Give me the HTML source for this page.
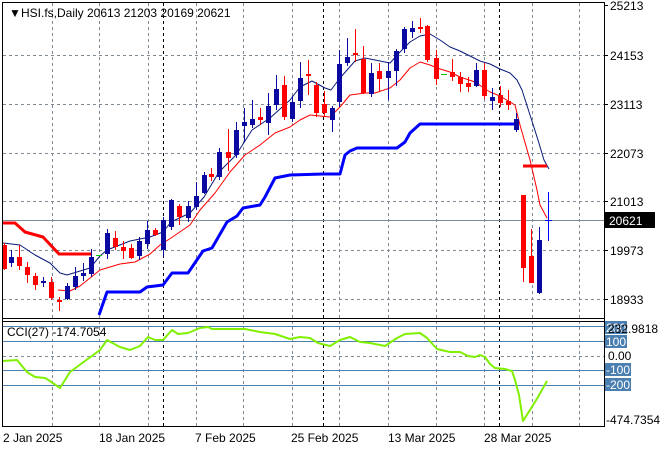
<!DOCTYPE html>
<html><head><meta charset="utf-8"><style>
html,body{margin:0;padding:0;background:#fff;width:660px;height:450px;overflow:hidden}
svg{display:block}
text{font-family:"Liberation Sans",sans-serif;font-size:12px;fill:#000}
</style></head><body>
<svg id="s" width="660" height="450" xmlns="http://www.w3.org/2000/svg">
<rect width="660" height="450" fill="#fff"/>
<g id="grid" stroke="#7f8a94" stroke-dasharray="3,3" stroke-width="1"></g>
<g id="bl" stroke="#000" stroke-dasharray="3,3" stroke-width="1">
<line x1="163.5" y1="3" x2="163.5" y2="426"/><line x1="323.5" y1="3" x2="323.5" y2="426"/><line x1="499.5" y1="3" x2="499.5" y2="426"/>
</g>
<line x1="3" y1="220.5" x2="604" y2="220.5" stroke="#7f8a94"/>
<g id="lines" fill="none"></g>
<g id="candles"></g>
<g id="cci" fill="none"></g>
<!-- borders -->
<g stroke="#000" fill="none">
<line x1="2.5" y1="2.5" x2="604.5" y2="2.5"/>
<line x1="2.5" y1="2" x2="2.5" y2="427"/>
<line x1="604.5" y1="2" x2="604.5" y2="427"/>
<line x1="2" y1="318.5" x2="605" y2="318.5"/>
<line x1="2" y1="321.5" x2="605" y2="321.5"/>
<line x1="2" y1="426.5" x2="605" y2="426.5"/>
</g>
<g id="ticks" stroke="#000"></g>
<text x="9" y="17" font-size="9">▼</text>
<text x="21" y="17">HSI.fs,Daily  20613 21203 20169 20621</text>
<text x="7" y="336">CCI(27) -174.7054</text>
<g id="ylab"></g>
<rect x="605" y="212" width="50" height="16" fill="#000"/>
<text x="609" y="225" style="fill:#fff">20621</text>
<rect x="605" y="321" width="22" height="13" fill="#4a7fb0"/>
<text x="606" y="332" style="fill:#fff">200</text>
<text x="608" y="333">232.9818</text>
<rect x="605" y="335" width="22" height="13" fill="#4a7fb0"/>
<text x="606" y="346" style="fill:#fff">100</text>
<text x="608" y="360">0.00</text>
<rect x="605" y="363" width="26" height="13" fill="#4a7fb0"/>
<text x="606" y="374" style="fill:#fff">-100</text>
<rect x="605" y="378" width="26" height="13" fill="#4a7fb0"/>
<text x="606" y="389" style="fill:#fff">-200</text>
<text x="606" y="424">-474.7354</text>
<text x="3" y="442">2 Jan 2025</text>
<text x="99" y="442">18 Jan 2025</text>
<text x="195" y="442">7 Feb 2025</text>
<text x="291" y="442">25 Feb 2025</text>
<text x="388" y="442">13 Mar 2025</text>
<text x="484" y="442">28 Mar 2025</text>
</svg>
<script>
const NS="http://www.w3.org/2000/svg";
function el(p,t,a){const e=document.createElementNS(NS,t);for(const k in a)e.setAttribute(k,a[k]);document.getElementById(p).appendChild(e);return e;}
const ys=[5,55,104,153,201,250,299],labs=["25213","24153","23113","22073","21013","19973","18933"];
ys.forEach((y,i)=>{if(i>0)el("grid","line",{x1:3,y1:y+.5,x2:604,y2:y+.5});
el("ticks","line",{x1:604,y1:y+.5,x2:608,y2:y+.5});
const t=el("ylab","text",{x:610,y:y+5});t.textContent=labs[i];});
[52,99,148,196,243,292,339,388,436,484,532,579].forEach(x=>el("grid","line",{x1:x+.5,y1:3,x2:x+.5,y2:426}));
el("grid","line",{x1:3,y1:356.5,x2:604,y2:356.5});
[326,341,370,385].forEach(y=>el("cci","line",{x1:3,y1:y+.5,x2:604,y2:y+.5,stroke:"#4a7fb0"}));
function pl(g,pts,c,w){el(g,"polyline",{points:pts,stroke:c,"stroke-width":w,fill:"none","stroke-linejoin":"round"});}
pl("lines","3,243 20,245 35,255 50,263 60,273 67,275 90,268 100,256 107,250 130,241 150,237 163,232 171,222 190,213 204,197 219,172 236,155 252,130 270,118 290,100 300,87 312,81 325,88 331,90 340,78 355,61 365,58 375,60 390,63 400,52 410,42 420,36 430,34 440,40 450,47 460,51 470,56 480,61 490,64 500,69 510,73 517,80 522,90 530,115 538,140 544,160 549,169","#0a1a7a",1);
pl("lines","58,290 70,291 80,286 100,270 120,264 135,262 150,254 160,245 171,238 190,225 200,210 215,193 230,172 245,155 260,145 275,133 290,127 300,120 310,115 330,117 340,107 350,95 365,93 375,93 390,88 400,80 410,68 420,62 430,65 440,69 450,72 460,77 475,82 490,92 500,96 515,105 520,125 530,160 537,190 540,205 547,218","#ff0000",1);
pl("lines","3,223 15,223 25,232 43,237 59,254 92,254","#ff0000",3);
pl("lines","523,166 547,166","#ff0000",3);
pl("lines","99,315 107,292 140,292 147,287 163,285 172,273 188,273 203,251 212,248 227,222 237,216 243,208 260,205 265,197 275,178 290,175 323,174 340,174 345,155 350,151 357,148 397,148 405,142 410,133 420,124 516,124","#0000ff",3);
const C=[[4,'r',245,269,243,270],[11,'b',257,263,250,267],[19,'r',257,266,245,270],[27,'r',267,275,262,283],[35,'r',276,285,273,290],[43,'b',281,283,277,287],[51,'r',282,298,277,300],[59,'r',300,302,297,311],[67,'b',286,299,283,300],[75,'b',276,287,267,290],[83,'b',273,276,263,281],[91,'b',257,274,249,277],[99,'g',255,256,255,256],[107,'b',233,254,229,259],[115,'r',238,247,231,250],[123,'r',247,251,241,259],[131,'r',248,258,244,259],[139,'b',241,256,237,260],[147,'b',230,244,221,249],[155,'r',230,235,228,236],[163,'b',220,250,217,257],[171,'b',200,227,199,230],[179,'r',206,217,204,225],[188,'b',206,218,201,222],[196,'b',196,207,182,210],[204,'b',175,193,172,194],[211,'r',174,177,168,181],[219,'b',152,177,148,180],[228,'r',152,158,129,171],[236,'b',130,155,122,158],[244,'b',122,126,108,142],[252,'b',119,125,100,128],[260,'r',117,120,108,125],[268,'b',106,123,93,135],[276,'b',89,105,75,110],[284,'r',85,117,76,120],[292,'b',102,119,96,122],[300,'b',78,101,62,108],[308,'r',74,76,60,95],[316,'r',85,113,82,117],[324,'r',104,113,91,117],[332,'b',108,120,106,132],[339,'b',64,102,50,107],[347,'b',57,63,38,66],[355,'r',53,55,29,62],[363,'r',59,93,46,94],[371,'b',73,94,63,97],[379,'r',71,79,63,91],[388,'b',71,78,62,100],[396,'b',51,71,49,86],[404,'b',29,49,27,53],[412,'b',28,32,21,38],[420,'r',27,28,18,33],[427,'r',26,60,25,62],[436,'r',58,79,50,85],[444,'g',74,75,74,75],[452,'r',72,77,59,81],[460,'r',77,84,72,92],[468,'r',83,87,77,92],[476,'b',70,86,63,87],[484,'r',70,96,63,99],[492,'b',97,101,88,110],[500,'r',95,103,86,107],[508,'r',101,105,90,110],[516,'b',119,130,113,132],[523,'r',195,268,195,282],[531,'r',256,283,229,283],[539,'b',240,293,227,294],[548,'b',220,221,192,241]];
C.forEach(c=>{const [x,t,bt,bb,wt,wb]=c;const col=t=='r'?'#ff0000':t=='b'?'#0a0aa0':'#00cc00';
if(t=='g'){el("candles","line",{x1:x-3,y1:bt+.5,x2:x+3,y2:bt+.5,stroke:col});return;}
el("candles","line",{x1:x+.5,y1:wt,x2:x+.5,y2:wb,stroke:t=='b'&&x==548?'#0000ff':col});
if(x==548){el("candles","line",{x1:x-3,y1:220.5,x2:x+4,y2:220.5,stroke:'#0000ff'});return;}
el("candles","rect",{x:x-2,y:bt,width:5,height:Math.max(2,bb-bt),fill:col});});
pl("cci","3,361 17,360 27,372 35,377 45,378 50,381 60,388 70,372 85,361 100,350 107,340 120,347 130,350 140,346 148,337 155,340 163,340 172,330 178,334 188,333 200,328 208,327 212,329 245,329 260,332 275,334 290,339 300,337 310,338 318,343 330,346 340,340 350,337 360,342 370,343 385,346 397,338 405,334 420,333 427,338 437,349 450,352 460,352 468,356 475,357 480,355 485,357 490,364 495,368 505,369 512,371 515,380 519,395 523,421 530,410 538,397 547,381","#80f000",2);
</script>
</body></html>
